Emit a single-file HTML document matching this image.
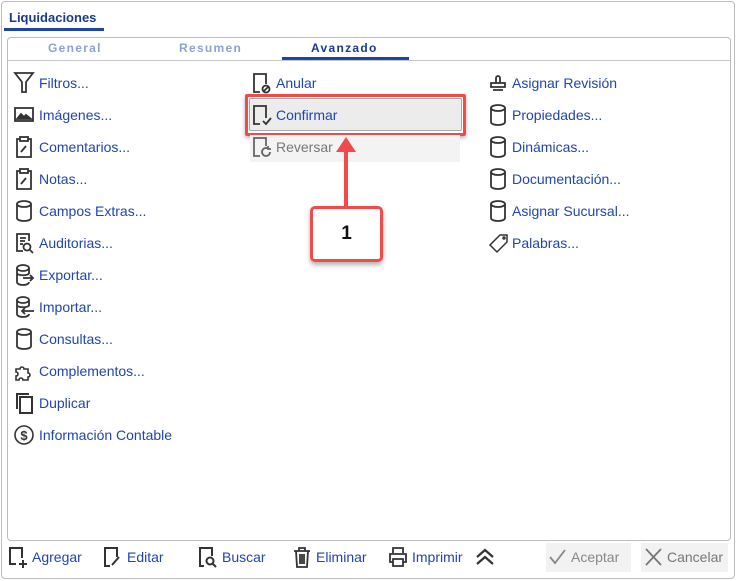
<!DOCTYPE html>
<html><head><meta charset="utf-8">
<style>
*{box-sizing:border-box;margin:0;padding:0}
body{width:736px;height:581px;background:#fff;font-family:"Liberation Sans",sans-serif;position:relative;overflow:hidden}
.frame{position:absolute;left:1px;top:1px;width:734px;height:578px;border:1px solid #bdbdbd;border-radius:4px;background:#fff}
.t{position:absolute;font-size:14px;color:#1f45b0;white-space:nowrap;line-height:16px;margin-top:1px}
.ic{position:absolute;width:20px;height:22px}
svg{overflow:visible}
</style></head><body>
<div class="frame"></div>
<div style="position:absolute;left:9px;top:10px;font-size:13px;font-weight:bold;color:#1a3a8f">Liquidaciones</div>
<div style="position:absolute;left:4px;top:28px;width:100px;height:3px;background:#1b46a3"></div>
<div style="position:absolute;left:7px;top:37px;width:724px;height:504px;border:1px solid #bdbdbd;border-radius:4px"></div>
<div style="position:absolute;left:8px;top:60px;width:722px;height:1px;background:#c8c8c8"></div>
<div style="position:absolute;left:48px;top:41px;font-size:12px;font-weight:bold;color:#8ca3cf;letter-spacing:1.3px">General</div>
<div style="position:absolute;left:179px;top:41px;font-size:12px;font-weight:bold;color:#8ca3cf;letter-spacing:1.3px">Resumen</div>
<div style="position:absolute;left:311px;top:41px;font-size:12px;font-weight:bold;color:#1a3a8f;letter-spacing:1.3px">Avanzado</div>
<div style="position:absolute;left:282px;top:57px;width:127px;height:3px;background:#1b46a3"></div>

<!-- left column -->
<svg class="ic" style="left:14px;top:72px" viewBox="0 0 20 22" fill="none" stroke="#333" stroke-width="1.8"><path d="M1 1h18l-7 9v10h-4V10z"/></svg>
<div class="t" style="left:39px;top:74px">Filtros...</div>
<svg class="ic" style="left:14px;top:104px" viewBox="0 0 20 22" fill="none" stroke="#333" stroke-width="1.8"><rect x="1" y="4" width="18" height="13"/><path d="M3 15l4-5 3 3 2-2 5 4z" fill="#333"/></svg>
<div class="t" style="left:39px;top:106px">Imágenes...</div>
<svg class="ic" style="left:14px;top:136px" viewBox="0 0 20 22" fill="none" stroke="#333" stroke-width="1.8"><path d="M6 3H3v18h14V3h-3"/><rect x="6" y="1" width="8" height="4"/><path d="M7 16l5-6"/></svg>
<div class="t" style="left:39px;top:138px">Comentarios...</div>
<svg class="ic" style="left:14px;top:168px" viewBox="0 0 20 22" fill="none" stroke="#333" stroke-width="1.8"><path d="M6 3H3v18h14V3h-3"/><rect x="6" y="1" width="8" height="4"/><path d="M7 16l5-6"/></svg>
<div class="t" style="left:39px;top:170px">Notas...</div>
<svg class="ic" style="left:14px;top:200px" viewBox="0 0 20 22" fill="none" stroke="#333" stroke-width="1.8"><ellipse cx="10" cy="4" rx="7" ry="3"/><path d="M3 4v14c0 4 14 4 14 0V4"/></svg>
<div class="t" style="left:39px;top:202px">Campos Extras...</div>
<svg class="ic" style="left:14px;top:232px" viewBox="0 0 20 22" fill="none" stroke="#333" stroke-width="1.8"><path d="M9 19H3V2h12v7"/><path d="M6 6h6M6 9h5M6 12h3"/><circle cx="13" cy="15" r="3.5"/><path d="M16 18l3 3"/></svg>
<div class="t" style="left:39px;top:234px">Auditorias...</div>
<svg class="ic" style="left:14px;top:264px" viewBox="0 0 20 22" fill="none" stroke="#333" stroke-width="1.8"><ellipse cx="9" cy="4" rx="6" ry="3"/><path d="M3 4v14c0 4 12 4 12 0M15 4v6M3 9c0 3 12 3 12 0M9 14h10M16 11l3 3-3 3"/></svg>
<div class="t" style="left:39px;top:266px">Exportar...</div>
<svg class="ic" style="left:14px;top:296px" viewBox="0 0 20 22" fill="none" stroke="#333" stroke-width="1.8"><ellipse cx="9" cy="4" rx="6" ry="3"/><path d="M3 4v14c0 4 12 4 12 0M15 4v6M3 9c0 3 12 3 12 0M20 15H8M11 12l-3 3 3 3"/></svg>
<div class="t" style="left:39px;top:298px">Importar...</div>
<svg class="ic" style="left:14px;top:328px" viewBox="0 0 20 22" fill="none" stroke="#333" stroke-width="1.8"><ellipse cx="10" cy="4" rx="7" ry="3"/><path d="M3 4v14c0 4 14 4 14 0V4"/></svg>
<div class="t" style="left:39px;top:330px">Consultas...</div>
<svg class="ic" style="left:14px;top:360px" viewBox="0 0 20 22" fill="none" stroke="#333" stroke-width="1.6"><path d="M2 9h4a2 2 0 1 1 4 0h4v4a2 2 0 1 1 0 4v3H9a2 2 0 1 0-4 0H2v-4a2 2 0 1 0 0-4z"/></svg>
<div class="t" style="left:39px;top:362px">Complementos...</div>
<svg class="ic" style="left:14px;top:392px" viewBox="0 0 20 22" fill="none" stroke="#333" stroke-width="2"><path d="M3 17V2h12"/><rect x="6" y="5" width="12" height="16"/></svg>
<div class="t" style="left:39px;top:394px">Duplicar</div>
<svg class="ic" style="left:14px;top:424px" viewBox="0 0 20 22" fill="none" stroke="#333" stroke-width="1.6"><circle cx="10" cy="11" r="9"/><text x="10" y="16" font-size="13" font-family="Liberation Sans" text-anchor="middle" fill="#333" stroke="none" font-weight="bold">$</text></svg>
<div class="t" style="left:39px;top:426px">Información Contable</div>

<!-- middle column -->
<svg class="ic" style="left:252px;top:72px" viewBox="0 0 20 22" fill="none" stroke="#333" stroke-width="1.8"><path d="M8 20H2V2h12v10"/><circle cx="14" cy="17" r="3.5"/><path d="M12 19l4-4"/></svg>
<div class="t" style="left:276px;top:74px">Anular</div>
<div style="position:absolute;left:245px;top:94px;width:221px;height:42px;border:3px solid #f04a4a;border-radius:2px;box-shadow:0 2px 4px rgba(0,0,0,.3)"></div>
<div style="position:absolute;left:249px;top:98px;width:213px;height:33px;background:#ececec;border:1px solid #a8a8a8;border-radius:2px"></div>
<svg class="ic" style="left:252px;top:104px" viewBox="0 0 20 22" fill="none" stroke="#333" stroke-width="1.8"><path d="M8 20H2V2h12v12"/><path d="M11 17l3 3 5-6"/></svg>
<div class="t" style="left:276px;top:106px">Confirmar</div>
<div style="position:absolute;left:250px;top:135px;width:210px;height:27px;background:#f3f3f3"></div>
<svg class="ic" style="left:252px;top:136px" viewBox="0 0 20 22" fill="none" stroke="#666" stroke-width="1.8"><path d="M8 20H2V2h12v8"/><path d="M18 16a4 4 0 1 1-2-3.5M16 10v3h3"/></svg>
<div class="t" style="left:276px;top:138px;color:#777">Reversar</div>
<div style="position:absolute;left:344px;top:150px;width:4px;height:58px;background:#f04a4a"></div>
<svg style="position:absolute;left:336px;top:137px" width="20" height="16"><path d="M10 0L20 15H0z" fill="#f04a4a"/></svg>
<div style="position:absolute;left:310px;top:206px;width:73px;height:56px;border:3px solid #f04a4a;border-radius:5px;background:#fff;box-shadow:0 3px 5px rgba(0,0,0,.3);font-size:19px;font-weight:bold;text-align:center;line-height:50px;color:#111">1</div>

<!-- right column -->
<svg class="ic" style="left:488px;top:72px" viewBox="0 0 20 22" fill="none" stroke="#333" stroke-width="1.8"><path d="M8 11V6a2 2 0 1 1 4 0v5M3 11h14v4H3zM5 18h10"/></svg>
<div class="t" style="left:512px;top:74px">Asignar Revisión</div>
<svg class="ic" style="left:488px;top:104px" viewBox="0 0 20 22" fill="none" stroke="#333" stroke-width="1.8"><ellipse cx="10" cy="4" rx="7" ry="3"/><path d="M3 4v14c0 4 14 4 14 0V4"/></svg>
<div class="t" style="left:512px;top:106px">Propiedades...</div>
<svg class="ic" style="left:488px;top:136px" viewBox="0 0 20 22" fill="none" stroke="#333" stroke-width="1.8"><ellipse cx="10" cy="4" rx="7" ry="3"/><path d="M3 4v14c0 4 14 4 14 0V4"/></svg>
<div class="t" style="left:512px;top:138px">Dinámicas...</div>
<svg class="ic" style="left:488px;top:168px" viewBox="0 0 20 22" fill="none" stroke="#333" stroke-width="1.8"><ellipse cx="10" cy="4" rx="7" ry="3"/><path d="M3 4v14c0 4 14 4 14 0V4"/></svg>
<div class="t" style="left:512px;top:170px">Documentación...</div>
<svg class="ic" style="left:488px;top:200px" viewBox="0 0 20 22" fill="none" stroke="#333" stroke-width="1.8"><ellipse cx="10" cy="4" rx="7" ry="3"/><path d="M3 4v14c0 4 14 4 14 0V4"/></svg>
<div class="t" style="left:512px;top:202px">Asignar Sucursal...</div>
<svg class="ic" style="left:488px;top:232px" viewBox="0 0 20 22" fill="none" stroke="#333" stroke-width="1.5"><path d="M12 3h7v7L9 20 2 13z"/><circle cx="16" cy="6" r="1"/></svg>
<div class="t" style="left:512px;top:234px">Palabras...</div>

<!-- bottom toolbar -->
<svg class="ic" style="left:8px;top:546px" viewBox="0 0 20 22" fill="none" stroke="#333" stroke-width="2"><path d="M8 18H2V2h12v10M15 14v8M11 18h8"/></svg>
<div class="t" style="left:32px;top:548px">Agregar</div>
<svg class="ic" style="left:103px;top:546px" viewBox="0 0 20 22" fill="none" stroke="#333" stroke-width="2"><path d="M7 20H2V2h12v9M9 19l7-8"/></svg>
<div class="t" style="left:127px;top:548px">Editar</div>
<svg class="ic" style="left:198px;top:546px" viewBox="0 0 20 22" fill="none" stroke="#333" stroke-width="2"><path d="M6 20H2V2h12v8"/><circle cx="12" cy="15" r="3.5"/><path d="M15 18l3 3"/></svg>
<div class="t" style="left:222px;top:548px">Buscar</div>
<svg class="ic" style="left:292px;top:546px" viewBox="0 0 20 22" fill="none" stroke="#333" stroke-width="1.8"><path d="M2 5h16M7 5V2h6v3M4 5l1 16h10l1-16M8 8v10M10 8v10M12 8v10"/></svg>
<div class="t" style="left:316px;top:548px">Eliminar</div>
<svg class="ic" style="left:388px;top:546px" viewBox="0 0 20 22" fill="none" stroke="#333" stroke-width="1.8"><path d="M5 7V2h10v5M5 16H2V8h16v8h-3M5 13h10v7H5z"/></svg>
<div class="t" style="left:412px;top:548px">Imprimir</div>
<svg style="position:absolute;left:475px;top:548px" width="20" height="18" fill="none" stroke="#333" stroke-width="2.2"><path d="M2 9l8-7 8 7M2 16l8-7 8 7"/></svg>
<div style="position:absolute;left:546px;top:543px;width:85px;height:29px;background:#f2f2f2"></div>
<svg style="position:absolute;left:548px;top:548px" width="20" height="18" fill="none" stroke="#888" stroke-width="1.8"><path d="M2 9l5 6L17 2"/></svg>
<div class="t" style="left:571px;top:548px;color:#888">Aceptar</div>
<div style="position:absolute;left:641px;top:543px;width:87px;height:29px;background:#f2f2f2"></div>
<svg style="position:absolute;left:644px;top:548px" width="20" height="18" fill="none" stroke="#777" stroke-width="1.8"><path d="M2 1l15 16M17 1L2 17"/></svg>
<div class="t" style="left:667px;top:548px;color:#777">Cancelar</div>
</body></html>
